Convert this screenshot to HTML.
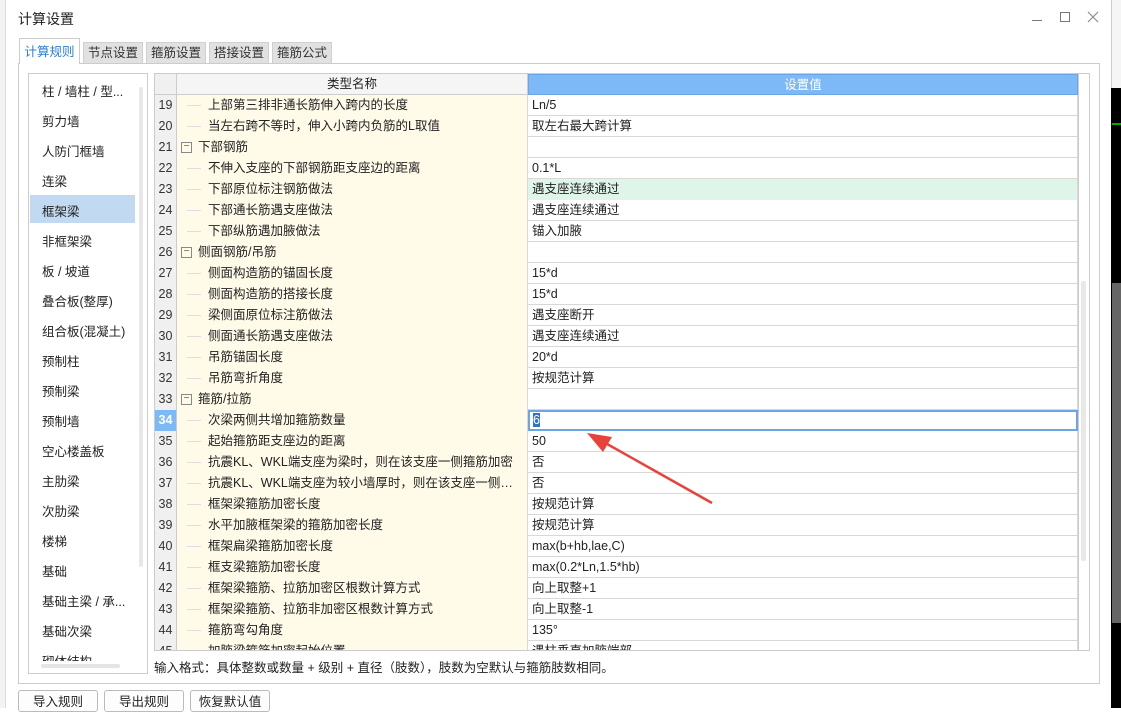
<!DOCTYPE html>
<html><head><meta charset="utf-8"><style>
*{margin:0;padding:0;box-sizing:border-box}
body{width:1121px;height:708px;overflow:hidden;background:#fff;font-family:"Liberation Sans","Noto Sans CJK SC",sans-serif;font-size:12px;color:#222;position:relative}
.abs{position:absolute}
.tab{position:absolute;top:42px;height:21px;background:#e1e1e1;border:1px solid #d0d0d0;border-bottom:none;font-size:12.5px;line-height:20px;text-align:center;color:#333}
.li{position:absolute;left:42px;font-size:12.5px;color:#222}
.row{position:absolute;left:0;height:21px;width:923px;border-bottom:1px solid #d8d8d8}
.num{position:absolute;left:0;top:0;width:22px;height:21px;background:#f0f0f0;border-right:1px solid #ccc;text-align:center;line-height:21px;font-size:12.5px;color:#333}
.nm{position:absolute;left:22px;top:0;width:351px;height:21px;background:#fffbe8;border-right:1px solid #d8d8d8;line-height:20px;font-size:12.5px;white-space:nowrap;overflow:hidden}
.vl{position:absolute;left:373px;top:0;width:550px;height:21px;line-height:20px;padding-left:4px;font-size:12.5px;border-right:1px solid #d8d8d8}
.ln{position:absolute;left:10px;top:10px;width:14px;border-top:1px solid #ddd}
.tx{position:absolute;left:31px;right:3px;overflow:hidden;text-overflow:ellipsis;white-space:nowrap}
.gbox{position:absolute;left:4px;top:5px;width:11px;height:11px;border:1px solid #888;font-size:10px;line-height:8px;text-align:center;color:#555}
.gt{position:absolute;left:21px}
.btn{position:absolute;top:690px;height:22px;border:1px solid #bbb;border-radius:3px;background:#fdfdfd;text-align:center;line-height:22px;font-size:12.5px}
</style></head><body>
<div class="abs" style="left:0;top:0;width:6px;height:708px;background:#f3f3f3;border-right:1px solid #ddd"></div>
<div class="abs" style="left:1111px;top:0;width:10px;height:88px;background:#f5f5f5;border-left:1px solid #ccc"></div>
<div class="abs" style="left:1111px;top:88px;width:10px;height:620px;background:#000"></div>
<div class="abs" style="left:1112px;top:283px;width:9px;height:340px;background:#666"></div>
<div class="abs" style="left:1112px;top:123px;width:9px;height:2px;background:#0a0"></div>
<div class="abs" style="left:18px;top:9px;font-size:14px;color:#222">计算设置</div>
<svg class="abs" style="left:1025px;top:5px" width="80" height="25"><line x1="7" y1="15.5" x2="17" y2="15.5" stroke="#777"/><rect x="35.5" y="7.5" width="9" height="9" fill="none" stroke="#777"/><path d="M63 7L73 17M73 7L63 17" stroke="#888" stroke-width="1.1"/></svg>
<div class="abs" style="left:18px;top:63px;width:1082px;height:621px;border:1px solid #ccc"></div>
<div class="tab" style="left:19px;top:38px;width:61px;height:26px;background:#fff;border-color:#ccc;color:#2a7fd4;line-height:26px;z-index:2">计算规则</div>
<div class="tab" style="left:83px;width:60px">节点设置</div>
<div class="tab" style="left:146px;width:60px">箍筋设置</div>
<div class="tab" style="left:209px;width:60px">搭接设置</div>
<div class="tab" style="left:272px;width:60px">箍筋公式</div>
<div class="abs" style="left:28px;top:73px;width:120px;height:601px;border:1px solid #ccc;overflow:hidden">
<div class="abs" style="left:1px;top:121px;width:105px;height:28px;background:#c2daf1"></div>
<div class="abs" style="left:110px;top:13px;width:4px;height:480px;background:#e8e8e8;border-radius:2px"></div>
<div class="abs" style="left:12px;top:590px;width:79px;height:4px;background:#e5e5e5;border-radius:2px"></div>
</div>
<div class="li" style="top:81px">柱 / 墙柱 / 型...</div>
<div class="li" style="top:111px">剪力墙</div>
<div class="li" style="top:141px">人防门框墙</div>
<div class="li" style="top:171px">连梁</div>
<div class="li" style="top:201px">框架梁</div>
<div class="li" style="top:231px">非框架梁</div>
<div class="li" style="top:261px">板 / 坡道</div>
<div class="li" style="top:291px">叠合板(整厚)</div>
<div class="li" style="top:321px">组合板(混凝土)</div>
<div class="li" style="top:351px">预制柱</div>
<div class="li" style="top:381px">预制梁</div>
<div class="li" style="top:411px">预制墙</div>
<div class="li" style="top:441px">空心楼盖板</div>
<div class="li" style="top:471px">主肋梁</div>
<div class="li" style="top:501px">次肋梁</div>
<div class="li" style="top:531px">楼梯</div>
<div class="li" style="top:561px">基础</div>
<div class="li" style="top:591px">基础主梁 / 承...</div>
<div class="li" style="top:621px">基础次梁</div>
<div class="abs" style="left:42px;top:651px;height:10px;overflow:hidden;font-size:12.5px">砌体结构</div>
<div class="abs" style="left:154px;top:73px;width:936px;height:578px;border:1px solid #ccc;overflow:hidden">
<div class="abs" style="left:0;top:0;width:22px;height:21px;background:#f0f0f0;border-right:1px solid #ccc;border-bottom:1px solid #ccc"></div>
<div class="abs" style="left:22px;top:0;width:351px;height:21px;background:#f5f5f5;border-right:1px solid #ccc;border-bottom:1px solid #ccc;text-align:center;line-height:20px;font-size:12.5px">类型名称</div>
<div class="abs" style="left:373px;top:0;width:550px;height:21px;background:#7db9f6;border:1px solid #6aa6e6;text-align:center;line-height:20px;font-size:12.5px;color:#fff">设置值</div>
<div class="abs" style="left:923px;top:0;width:13px;height:578px;border-left:1px solid #ccc;background:#fff"></div>
<div class="abs" style="left:926px;top:207px;width:5px;height:280px;background:#e8e8e8;border-radius:2px"></div>
<div id="rows" class="abs" style="left:0;top:21px;width:923px"></div>
</div>
<div class="abs" style="left:154px;top:657px;font-size:12.5px">输入格式：具体整数或数量 + 级别 + 直径（肢数），肢数为空默认与箍筋肢数相同。</div>
<div class="btn" style="left:18px;width:80px">导入规则</div>
<div class="btn" style="left:104px;width:80px">导出规则</div>
<div class="btn" style="left:190px;width:80px">恢复默认值</div>
<svg class="abs" style="left:0;top:0" width="1121" height="708"><line x1="712" y1="503" x2="600" y2="440" stroke="#e8423a" stroke-width="2.5"/><polygon points="587,433 612,437 603,452" fill="#e8423a"/></svg>
<script>
var d=[[19,0,"上部第三排非通长筋伸入跨内的长度","Ln/5"],[20,0,"当左右跨不等时，伸入小跨内负筋的L取值","取左右最大跨计算"],[21,1,"下部钢筋",""],[22,0,"不伸入支座的下部钢筋距支座边的距离","0.1*L"],[23,0,"下部原位标注钢筋做法","遇支座连续通过"],[24,0,"下部通长筋遇支座做法","遇支座连续通过"],[25,0,"下部纵筋遇加腋做法","锚入加腋"],[26,1,"侧面钢筋/吊筋",""],[27,0,"侧面构造筋的锚固长度","15*d"],[28,0,"侧面构造筋的搭接长度","15*d"],[29,0,"梁侧面原位标注筋做法","遇支座断开"],[30,0,"侧面通长筋遇支座做法","遇支座连续通过"],[31,0,"吊筋锚固长度","20*d"],[32,0,"吊筋弯折角度","按规范计算"],[33,1,"箍筋/拉筋",""],[34,0,"次梁两侧共增加箍筋数量","6"],[35,0,"起始箍筋距支座边的距离","50"],[36,0,"抗震KL、WKL端支座为梁时，则在该支座一侧箍筋加密","否"],[37,0,"抗震KL、WKL端支座为较小墙厚时，则在该支座一侧箍筋加密","否"],[38,0,"框架梁箍筋加密长度","按规范计算"],[39,0,"水平加腋框架梁的箍筋加密长度","按规范计算"],[40,0,"框架扁梁箍筋加密长度","max(b+hb,lae,C)"],[41,0,"框支梁箍筋加密长度","max(0.2*Ln,1.5*hb)"],[42,0,"框架梁箍筋、拉筋加密区根数计算方式","向上取整+1"],[43,0,"框架梁箍筋、拉筋非加密区根数计算方式","向上取整-1"],[44,0,"箍筋弯勾角度","135°"],[45,0,"加腋梁箍筋加密起始位置","遇柱垂直加腋端部"]];
var h="";d.forEach(function(r,i){var n=r[0],sel=n==34;
var nm=r[1]?'<div class="gbox">−</div><div class="gt">'+r[2]+'</div>':'<div class="ln"></div><div class="tx">'+r[2]+'</div>';
var vs=n==23?'background:#e0f5ea;':'';
var vv=r[3];if(sel){vs='border:2px solid #6aa6e6;line-height:17px;padding-left:3px;';vv='<span style="background:#3173c6;color:#fff">6</span>';}
h+='<div class="row" style="top:'+(i*21)+'px"><div class="num" style="'+(sel?'background:#7db9f6;color:#fff;font-weight:bold':'')+'">'+n+'</div><div class="nm">'+nm+'</div><div class="vl" style="'+vs+'">'+vv+'</div></div>';});
document.getElementById("rows").innerHTML=h;
</script>
</body></html>
